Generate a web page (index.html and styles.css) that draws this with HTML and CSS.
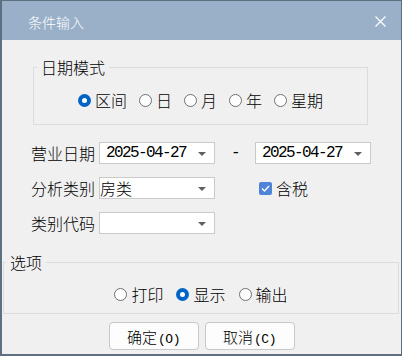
FILE: index.html
```html
<!DOCTYPE html>
<html lang="zh-CN">
<head>
    <meta charset="UTF-8" />
    <meta name="viewport" content="width=device-width, initial-scale=1.0"/>
    <title>条件输入</title>
    <link rel="stylesheet" href="styles.css">
</head>
<body>

<div class="window">
    <div class="titlebar">
        <span class="title">条件输入</span>
        <svg class="close" width="11" height="11" viewBox="0 0 11 11">
            <path d="M0.5 0.5 L10.5 10.5 M10.5 0.5 L0.5 10.5" stroke="#fff" stroke-width="1.2" fill="none"/>
        </svg>
    </div>

    <div class="content">
        <fieldset class="group mode">
            <legend>日期模式</legend>
            <div class="radios">
                <label class="opt"><span class="radio on"></span>区间</label>
                <label class="opt"><span class="radio"></span>日</label>
                <label class="opt"><span class="radio"></span>月</label>
                <label class="opt"><span class="radio"></span>年</label>
                <label class="opt"><span class="radio"></span>星期</label>
            </div>
        </fieldset>

        <div class="row first">
            <span class="label">营业日期</span>
            <div class="select mono">2025-04-27<i class="arrow"></i></div>
            <span class="dash mono">-</span>
            <div class="select mono">2025-04-27<i class="arrow"></i></div>
        </div>

        <div class="row">
            <span class="label">分析类别</span>
            <div class="select plain">房类<i class="arrow"></i></div>
            <label class="check"><span class="checkbox">
                <svg width="9" height="7" viewBox="0 0 9 7"><path d="M1 3.5 L3.5 6 L8 1" stroke="#fff" stroke-width="1.3" fill="none"/></svg>
            </span>含税</label>
        </div>

        <div class="row">
            <span class="label">类别代码</span>
            <div class="select"><i class="arrow"></i></div>
        </div>

        <fieldset class="group options">
            <legend>选项</legend>
            <div class="radios">
                <label class="opt"><span class="radio"></span>打印</label>
                <label class="opt"><span class="radio on"></span>显示</label>
                <label class="opt"><span class="radio"></span>输出</label>
            </div>
        </fieldset>

        <div class="buttons">
            <button>确定<span class="mono">(O)</span></button>
            <button>取消<span class="mono">(C)</span></button>
        </div>
    </div>
</div>

</body>
</html>
```

FILE: styles.css
```css
body {
    margin: 0;
    font-family: "Noto Sans CJK SC", "Noto Sans", sans-serif;
    font-weight: 300;
    background: #f0f0f0;
    color: #000;
    overflow: hidden;
}

.window {
    box-sizing: border-box;
    width: 402px;
    height: 356px;
    border: 1px solid #5d6f81;
    border-left-width: 2px;
    border-bottom-width: 2px;
    background: #f0f0f0;
    display: flex;
    flex-direction: column;
}

.titlebar {
    height: 39px;
    flex: none;
    background: #99b0c8;
    display: flex;
    align-items: center;
    justify-content: space-between;
    padding: 0 15px 0 26px;
}

.title {
    color: #fff;
    font-size: 14px;
    line-height: 20px;
    margin-top: 2px;
}

.close {
    display: block;
    margin-top: 2px;
}

.content {
    flex: 1;
    display: flex;
    flex-direction: column;
}

.group {
    box-sizing: border-box;
    margin: 0;
    min-width: 0;
    border: 1px solid #dcdcdc;
}

.group legend {
    font-size: 16px;
    line-height: 20px;
    padding: 0 4px;
}

.mode {
    width: 335px;
    margin: 17px 0 0 31px;
    padding: 13px 3px 14px;
}

.options {
    width: 396px;
    margin: 18px 0 0 1px;
    padding: 12px 2px 9px;
}

.radios {
    display: flex;
    justify-content: center;
    align-items: center;
    gap: 12px;
    height: 20px;
    font-size: 16px;
    line-height: 20px;
}

.options .radios {
    gap: 13px;
}

.opt {
    display: flex;
    align-items: center;
}

.radio {
    box-sizing: border-box;
    width: 13px;
    height: 13px;
    border: 1px solid #707070;
    border-radius: 50%;
    background: #fff;
    margin-right: 4px;
    position: relative;
}

.radio.on {
    border: none;
    background: #0063c6;
}

.radio.on::after {
    content: "";
    position: absolute;
    left: 4px;
    top: 4px;
    width: 5px;
    height: 5px;
    border-radius: 50%;
    background: #fff;
}

.row {
    display: flex;
    align-items: center;
    height: 22px;
    margin: 13px 0 0 29px;
    font-size: 16px;
}

.row.first {
    margin-top: 17px;
}

.label {
    width: 64px;
    margin-right: 4px;
    line-height: 22px;
}

.select {
    box-sizing: border-box;
    width: 116px;
    height: 22px;
    border: 1px solid #cacaca;
    background: #fff;
    display: flex;
    align-items: center;
    padding-left: 6px;
    position: relative;
}

.select.plain {
    padding-left: 0;
}

.mono {
    font-family: "Liberation Mono", monospace;
    font-weight: 400;
    font-size: 16px;
    letter-spacing: -1.6px;
}

.arrow {
    position: absolute;
    right: 8px;
    top: 9px;
    width: 0;
    height: 0;
    border-left: 4px solid transparent;
    border-right: 4px solid transparent;
    border-top: 4px solid #5f5f5f;
}

.dash {
    width: 40px;
    text-align: center;
}

.check {
    display: flex;
    align-items: center;
    margin-left: 44px;
}

.checkbox {
    box-sizing: border-box;
    width: 13px;
    height: 13px;
    border-radius: 2px;
    background: #4f84d8;
    margin-right: 4px;
    display: flex;
    align-items: center;
    justify-content: center;
}

.checkbox svg {
    display: block;
}

.buttons {
    display: flex;
    justify-content: center;
    gap: 6px;
    margin-top: 8px;
}

button {
    box-sizing: border-box;
    width: 90px;
    height: 28px;
    border: 1px solid #c8c8c8;
    border-radius: 4px;
    background: #fdfdfd;
    font-family: "Noto Sans CJK SC", sans-serif;
    font-weight: 300;
    font-size: 15px;
    color: #000;
    padding: 0;
}

button .mono {
    font-size: 13px;
    letter-spacing: -0.5px;
    margin-left: 1px;
}
```
